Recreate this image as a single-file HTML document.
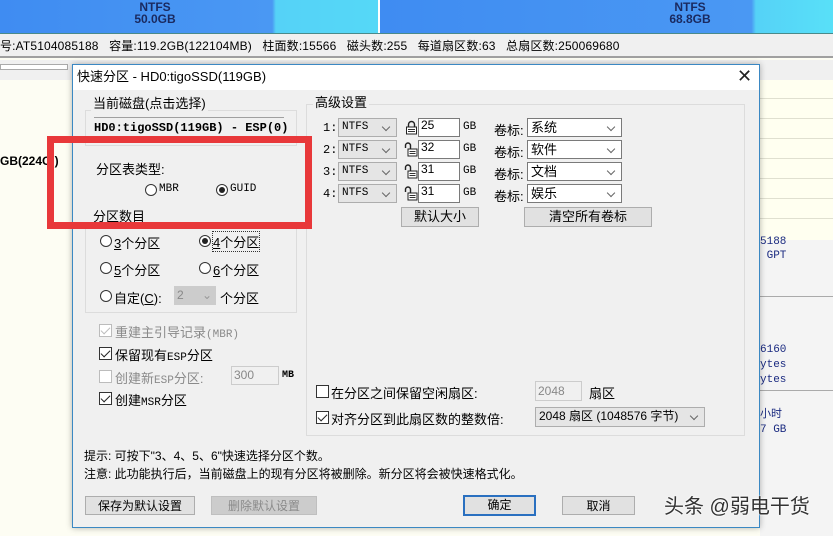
<!DOCTYPE html>
<html><head><meta charset="utf-8"><style>
*{margin:0;padding:0;box-sizing:border-box}
body{width:833px;height:536px;overflow:hidden;position:relative;background:#fdfdf3;font-family:"Liberation Sans","Noto Sans CJK SC",sans-serif;font-size:12px;color:#000}
.a{position:absolute;white-space:nowrap}
.mono{font-family:"Liberation Mono","Noto Sans CJK SC",monospace}
.grp{position:absolute;border:1px solid #dcdcdc}
.lbl{position:absolute;background:#f0f0f0;padding:0 2px;font-size:12px;line-height:14px}
.cb{position:absolute;width:19px;height:19px;background:#e5e5e5;border:1px solid #adadad;font-size:11px;line-height:17px;padding-left:3px}
.cb:after{content:"";position:absolute;right:7px;top:5px;width:5px;height:5px;border-right:1px solid #666;border-bottom:1px solid #666;transform:rotate(45deg)}
.wcb{background:#fff;border-color:#7a7a7a}
.in{position:absolute;background:#fff;border:1px solid #7a7a7a;height:19px;font-size:12px;line-height:17px;padding-left:2px}
.btn{position:absolute;background:#e1e1e1;border:1px solid #adadad;text-align:center;font-size:12px;line-height:18px}
.rd{position:absolute;width:12px;height:12px;border:1px solid #333;border-radius:50%;background:#fff}
.rd.on:after{content:"";position:absolute;left:2px;top:2px;width:6px;height:6px;border-radius:50%;background:#222}
.ck{position:absolute;width:13px;height:13px;border:1px solid #333;background:#fff}
.ck.on:after{content:"";position:absolute;left:3px;top:0px;width:4px;height:8px;border-right:1.5px solid #222;border-bottom:1.5px solid #222;transform:rotate(45deg)}
.ck.dis{border-color:#bcbcbc}
.ck.dis:after{border-color:#bcbcbc}
svg.lk{position:absolute}
</style></head><body>
<!-- top bar -->
<div class="a" style="left:0;top:0;width:378px;height:34px;background:linear-gradient(90deg,#3f8cf2 0%,#4a98f3 72%,#55d2f7 73%,#55d8f7 100%)"></div>
<div class="a" style="left:378px;top:0;width:2px;height:34px;background:#fff"></div>
<div class="a" style="left:380px;top:0;width:453px;height:34px;background:linear-gradient(90deg,#3f8cf2 0%,#4a98f3 82%,#55d2f7 83%,#58e0f8 100%)"></div>
<div class="a" style="left:0;top:33px;width:833px;height:1px;background:#4a8a8a"></div>
<div class="a" style="left:125px;top:1px;width:60px;text-align:center;font-weight:bold;font-size:12px;line-height:12px;color:#1a2a60">NTFS<br>50.0GB</div>
<div class="a" style="left:660px;top:1px;width:60px;text-align:center;font-weight:bold;font-size:12px;line-height:12px;color:#1a2a60">NTFS<br>68.8GB</div>
<!-- info bar -->
<div class="a" style="left:0;top:34px;width:833px;height:24px;background:#f0f0f0;border-bottom:2px solid #a0a0a0"></div>
<div class="a" style="left:0;top:38px;font-size:12px;line-height:16px;letter-spacing:0.15px">号:AT5104085188&nbsp;&nbsp;&nbsp;容量:119.2GB(122104MB)&nbsp;&nbsp;&nbsp;柱面数:15566&nbsp;&nbsp;&nbsp;磁头数:255&nbsp;&nbsp;&nbsp;每道扇区数:63&nbsp;&nbsp;&nbsp;总扇区数:250069680</div>
<div class="a" style="left:0;top:60px;width:833px;height:20px;background:#f0f0f0"></div>
<div class="a" style="left:0;top:64px;width:68px;height:6px;border:1px solid #aaa;background:#fff"></div>
<div class="a" style="left:0;top:154px;font-weight:bold;font-size:12px" >GB(224G )</div>
<!-- right panel -->
<div class="a" style="left:760px;top:80px;width:73px;height:160px;background:#fffff0"></div>
<div class="a" style="left:760px;top:98px;width:73px;height:1px;background:#e0e0d0"></div>
<div class="a" style="left:760px;top:118px;width:73px;height:1px;background:#e0e0d0"></div>
<div class="a" style="left:760px;top:138px;width:73px;height:1px;background:#e0e0d0"></div>
<div class="a" style="left:760px;top:158px;width:73px;height:1px;background:#e0e0d0"></div>
<div class="a" style="left:760px;top:178px;width:73px;height:1px;background:#e0e0d0"></div>
<div class="a" style="left:760px;top:198px;width:73px;height:1px;background:#e0e0d0"></div>
<div class="a" style="left:760px;top:218px;width:73px;height:1px;background:#e0e0d0"></div>
<div class="a" style="left:760px;top:240px;width:73px;height:296px;background:#f4f4f4"></div>
<div class="a" style="left:760px;top:296px;width:73px;height:1px;background:#aaa"></div>
<div class="a" style="left:760px;top:390px;width:73px;height:1px;background:#aaa"></div>
<div class="a mono" style="left:760px;top:235px;font-size:11px;line-height:14px;color:#1a2a80">5188<br>&nbsp;GPT</div>
<div class="a mono" style="left:760px;top:343px;font-size:11px;line-height:15px;color:#1a2a80">6160<br>ytes<br>ytes</div>
<div class="a mono" style="left:760px;top:408px;font-size:11px;line-height:15px;color:#1a2a80">小时<br>7 GB</div>
<!-- dialog -->
<div class="a" style="left:72px;top:64px;width:688px;height:464px;background:#f0f0f0;border:1px solid #3b88c3;box-shadow:0 0 6px rgba(0,0,0,.3)"></div>
<div class="a" style="left:73px;top:65px;width:686px;height:25px;background:#fff"></div>
<div class="a" style="left:77px;top:69px;font-size:13px;line-height:16px">快速分区 - HD0:tigoSSD(119GB)</div>
<div class="a" style="left:737px;top:66px;font-size:18px;line-height:20px;color:#222">✕</div>

<div class="grp" style="left:85px;top:110px;width:212px;height:36px"></div>
<div class="lbl" style="left:91px;top:97px;font-size:13px">当前磁盘(点击选择)</div>
<div class="a" style="left:94px;top:117px;width:190px;height:19px;border-top:1px solid #a0a0a0;font-weight:bold;font-family:'Liberation Mono','Noto Sans CJK SC',monospace;font-size:12px;line-height:20px">HD0:tigoSSD(119GB) - ESP(0)</div>
<div class="a" style="left:96px;top:159px;font-size:13px">分区表类型:</div>
<div class="rd" style="left:145px;top:184px"></div><div class="a mono" style="left:159px;top:183px;font-size:11px">MBR</div>
<div class="rd on" style="left:216px;top:184px"></div><div class="a mono" style="left:230px;top:183px;font-size:11px">GUID</div>

<div class="grp" style="left:85px;top:222px;width:212px;height:91px"></div>
<div class="lbl" style="left:91px;top:210px;font-size:13px">分区数目</div>
<div class="rd" style="left:100px;top:235px"></div><div class="a" style="left:114px;top:233px;font-size:13px"><u>3</u>个分区</div>
<div class="rd on" style="left:199px;top:235px"></div><div class="a" style="left:213px;top:232px;font-size:13px;outline:1px dotted #333"><u>4</u>个分区</div>
<div class="rd" style="left:100px;top:262px"></div><div class="a" style="left:114px;top:260px;font-size:13px"><u>5</u>个分区</div>
<div class="rd" style="left:199px;top:262px"></div><div class="a" style="left:213px;top:260px;font-size:13px"><u>6</u>个分区</div>
<div class="rd" style="left:100px;top:290px"></div><div class="a" style="left:114px;top:288px;font-size:13px">自定(<u>C</u>):</div>
<div class="a" style="left:174px;top:286px;width:42px;height:19px;background:#ccc;color:#888;font-size:12px;line-height:19px;padding-left:3px">2<span style="position:absolute;right:4px;color:#999">⌄</span></div>
<div class="a" style="left:220px;top:288px;font-size:13px">个分区</div>

<div class="ck on dis" style="left:99px;top:324px"></div><div class="a" style="left:115px;top:322px;font-size:13px;color:#8a8a8a">重建主引导记录<span class="mono" style="font-size:11px">(MBR)</span></div>
<div class="ck on" style="left:99px;top:347px"></div><div class="a" style="left:115px;top:345px;font-size:13px">保留现有<span class="mono" style="font-size:11px">ESP</span>分区</div>
<div class="ck dis" style="left:99px;top:370px"></div><div class="a" style="left:115px;top:368px;font-size:13px;color:#8a8a8a">创建新<span class="mono" style="font-size:11px">ESP</span>分区:</div>
<div class="a" style="left:231px;top:366px;width:48px;height:19px;border:1px solid #ccc;color:#888;font-size:12px;line-height:17px;padding-left:2px;background:#f0f0f0">300</div>
<div class="a mono" style="left:282px;top:370px;font-size:10px;font-weight:bold">MB</div>
<div class="ck on" style="left:99px;top:392px"></div><div class="a" style="left:115px;top:390px;font-size:13px">创建<span class="mono" style="font-size:11px">MSR</span>分区</div>

<!-- advanced -->
<div class="grp" style="left:306px;top:104px;width:439px;height:332px"></div>
<div class="lbl" style="left:313px;top:96px;font-size:13px">高级设置</div>

<div class="a mono" style="left:323px;top:121px;font-size:12px;line-height:14px">1:</div>
<div class="a mono" style="left:323px;top:143px;font-size:12px">2:</div>
<div class="a mono" style="left:323px;top:165px;font-size:12px">3:</div>
<div class="a mono" style="left:323px;top:187px;font-size:12px">4:</div>

<div class="cb mono" style="left:338px;top:118px;width:59px">NTFS</div>
<div class="cb mono" style="left:338px;top:140px;width:59px">NTFS</div>
<div class="cb mono" style="left:338px;top:162px;width:59px">NTFS</div>
<div class="cb mono" style="left:338px;top:184px;width:59px">NTFS</div>

<svg class="lk" style="left:405px;top:120px" width="13" height="15" viewBox="0 0 13 15"><path d="M3.5 7V4.5a3 3 0 0 1 6 0V7" fill="none" stroke="#222" stroke-width="1.4"/><rect x="1.5" y="7" width="10" height="7" fill="#fff" stroke="#222"/><path d="M3 9.5h7M3 11.5h7" stroke="#333"/></svg>
<svg class="lk" style="left:404px;top:142px" width="14" height="15" viewBox="0 0 14 15"><path d="M1.5 6V3.5a2.5 2.5 0 0 1 5 0V7" fill="none" stroke="#222" stroke-width="1.4"/><rect x="4" y="7" width="9" height="7" fill="#fff" stroke="#222"/><path d="M5.5 9.5h6M5.5 11.5h6" stroke="#333"/></svg>
<svg class="lk" style="left:404px;top:164px" width="14" height="15" viewBox="0 0 14 15"><path d="M1.5 6V3.5a2.5 2.5 0 0 1 5 0V7" fill="none" stroke="#222" stroke-width="1.4"/><rect x="4" y="7" width="9" height="7" fill="#fff" stroke="#222"/><path d="M5.5 9.5h6M5.5 11.5h6" stroke="#333"/></svg>
<svg class="lk" style="left:404px;top:186px" width="14" height="15" viewBox="0 0 14 15"><path d="M1.5 6V3.5a2.5 2.5 0 0 1 5 0V7" fill="none" stroke="#222" stroke-width="1.4"/><rect x="4" y="7" width="9" height="7" fill="#fff" stroke="#222"/><path d="M5.5 9.5h6M5.5 11.5h6" stroke="#333"/></svg>

<div class="in" style="left:418px;top:118px;width:42px;line-height:12px">25</div>
<div class="in" style="left:418px;top:140px;width:42px;line-height:12px">32</div>
<div class="in" style="left:418px;top:162px;width:42px;line-height:12px">31</div>
<div class="in" style="left:418px;top:184px;width:42px;line-height:12px">31</div>

<div class="a mono" style="left:463px;top:121px;font-size:11px">GB</div>
<div class="a mono" style="left:463px;top:143px;font-size:11px">GB</div>
<div class="a mono" style="left:463px;top:165px;font-size:11px">GB</div>
<div class="a mono" style="left:463px;top:187px;font-size:11px">GB</div>

<div class="a" style="left:494px;top:120px;font-size:13px">卷标:</div>
<div class="a" style="left:494px;top:142px;font-size:13px">卷标:</div>
<div class="a" style="left:494px;top:164px;font-size:13px">卷标:</div>
<div class="a" style="left:494px;top:186px;font-size:13px">卷标:</div>

<div class="cb wcb" style="left:527px;top:118px;width:95px;font-size:13px">系统</div>
<div class="cb wcb" style="left:527px;top:140px;width:95px;font-size:13px">软件</div>
<div class="cb wcb" style="left:527px;top:162px;width:95px;font-size:13px">文档</div>
<div class="cb wcb" style="left:527px;top:184px;width:95px;font-size:13px">娱乐</div>

<div class="btn" style="left:401px;top:207px;width:78px;height:20px;font-size:13px">默认大小</div>
<div class="btn" style="left:524px;top:207px;width:128px;height:20px;font-size:13px">清空所有卷标</div>

<div class="ck" style="left:316px;top:385px"></div><div class="a" style="left:331px;top:383px;font-size:13px">在分区之间保留空闲扇区:</div>
<div class="a" style="left:535px;top:381px;width:47px;height:20px;border:1px solid #ccc;color:#888;font-size:12px;line-height:18px;padding-left:2px">2048</div>
<div class="a" style="left:589px;top:383px;font-size:13px">扇区</div>
<div class="ck on" style="left:316px;top:411px"></div><div class="a" style="left:331px;top:409px;font-size:13px">对齐分区到此扇区数的整数倍:</div>
<div class="cb" style="left:535px;top:407px;width:170px;height:20px;font-size:12px">2048 扇区 (1048576 字节)</div>

<div class="a" style="left:84px;top:447px;font-size:12px">提示: 可按下"3、4、5、6"快速选择分区个数。</div>
<div class="a" style="left:84px;top:465px;font-size:12px">注意: 此功能执行后，当前磁盘上的现有分区将被删除。新分区将会被快速格式化。</div>

<div class="btn" style="left:85px;top:496px;width:110px;height:19px">保存为默认设置</div>
<div class="btn" style="left:211px;top:496px;width:106px;height:19px;background:#ccc;border-color:#bfbfbf;color:#8a8a8a">删除默认设置</div>
<div class="btn" style="left:463px;top:495px;width:73px;height:21px;border:2px solid #2a70c0;line-height:17px">确定</div>
<div class="btn" style="left:562px;top:496px;width:73px;height:19px">取消</div>

<!-- red box -->
<div class="a" style="left:47px;top:136px;width:265px;height:93px;border:7px solid #e8383a"></div>

<div class="a" style="left:664px;top:494px;font-size:20px;line-height:26px;color:#333;text-shadow:0 0 2px #fff,0 0 2px #fff">头条 @弱电干货</div>
</body></html>
